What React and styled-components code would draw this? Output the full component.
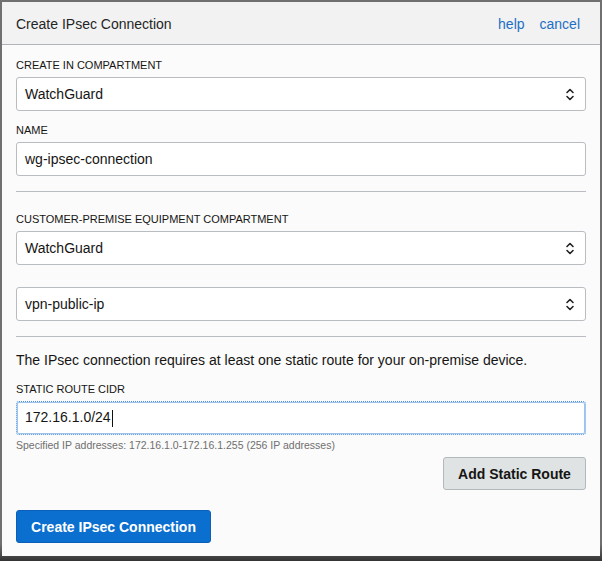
import React from "react";
import styled, { createGlobalStyle } from "styled-components";

const Global = createGlobalStyle`
  html, body { margin: 0; padding: 0; }
  body {
    background: #6d6d6d;
    font-family: "Liberation Sans", Arial, sans-serif;
    width: 602px;
    height: 561px;
    overflow: hidden;
  }
  * { box-sizing: border-box; }
`;

const Frame = styled.div`
  width: 602px;
  height: 561px;
  padding: 2px 2px 5px 2px;
  background: linear-gradient(to bottom, #707070 0%, #707070 97%, #333 100%);
`;

const Panel = styled.div`
  background: #fbfbfb;
  height: 100%;
  display: flex;
  flex-direction: column;
`;

const Header = styled.div`
  height: 43px;
  background: #f2f2f2;
  border-bottom: 1px solid #b0b4ba;
  display: flex;
  align-items: center;
  justify-content: space-between;
  padding: 0 20px 0 14px;
  flex-shrink: 0;
`;

const Title = styled.div`
  font-size: 14px;
  color: #252525;
  padding-top: 1px;
`;

const Links = styled.div`
  display: flex;
  gap: 15px;
  padding-top: 1px;
`;

const Link = styled.a`
  font-size: 14px;
  color: #1f6fc5;
  text-decoration: none;
`;

const Body = styled.div`
  padding: 14px 14px 0 14px;
  display: flex;
  flex-direction: column;
`;

const Label = styled.div`
  font-size: 11px;
  line-height: 13px;
  color: #161513;
  text-transform: uppercase;
  margin-top: ${(p) => p.$mt ?? 0}px;
  margin-bottom: 5px;
`;

const BoxBase = styled.div`
  height: 34px;
  border: 1px solid ${(p) => (p.$focus ? "transparent" : "#b9bdc2")};
  border-radius: 3px;
  background: #fff;
  display: flex;
  align-items: center;
  padding: 0 10px 0 8px;
  font-size: 14px;
  color: #161513;
  margin-top: ${(p) => p.$mt ?? 0}px;
  ${(p) =>
    p.$focus &&
    `outline: 1px dotted #4a90e2; outline-offset: -1px; box-shadow: inset 0 0 0 1px #9ec2ea;`}
`;

const Value = styled.span`
  flex: 1;
`;

const Caret = styled.span`
  display: inline-block;
  width: 1px;
  height: 17px;
  background: #111;
  vertical-align: middle;
  margin-left: 1px;
`;

const Divider = styled.div`
  height: 1px;
  background: #b9bdc2;
  margin-top: ${(p) => p.$mt}px;
`;

const Para = styled.p`
  margin: 15px 0 0 0;
  font-size: 14px;
  line-height: 16px;
  color: #161513;
`;

const Help = styled.div`
  font-size: 10.5px;
  line-height: 12px;
  color: #6f6f6f;
  margin-top: 4px;
`;

const Row = styled.div`
  display: flex;
  justify-content: flex-end;
  margin-top: 6px;
`;

const SecondaryButton = styled.button`
  height: 33px;
  width: 143px;
  border: 1px solid #b3b8bc;
  border-radius: 3px;
  background: #dfe3e4;
  font-family: inherit;
  font-weight: bold;
  font-size: 14px;
  color: #161513;
  padding: 0;
`;

const PrimaryButton = styled.button`
  align-self: flex-start;
  margin-top: 20px;
  height: 33px;
  width: 195px;
  border: 1px solid #0a5fb8;
  border-radius: 3px;
  background: #0b6fcf;
  font-family: inherit;
  font-weight: bold;
  font-size: 14px;
  color: #fff;
  padding: 0;
`;

const Chevrons = () => (
  <svg width="10" height="15" viewBox="0 0 10 15" fill="none" stroke="#222" strokeWidth="1.6" strokeLinecap="round" strokeLinejoin="round">
    <path d="M2 5.5 L5 2.5 L8 5.5" />
    <path d="M2 9.5 L5 12.5 L8 9.5" />
  </svg>
);

const Select = ({ value, mt }) => (
  <BoxBase $mt={mt}>
    <Value>{value}</Value>
    <Chevrons />
  </BoxBase>
);

export default function App() {
  return (
    <>
      <Global />
      <Frame>
        <Panel>
          <Header>
            <Title>Create IPsec Connection</Title>
            <Links>
              <Link>help</Link>
              <Link>cancel</Link>
            </Links>
          </Header>
          <Body>
            <Label>Create in compartment</Label>
            <Select value="WatchGuard" />
            <Label $mt={13}>Name</Label>
            <BoxBase>
              <Value>wg-ipsec-connection</Value>
            </BoxBase>
            <Divider $mt={15} />
            <Label $mt={21}>Customer-Premise Equipment Compartment</Label>
            <Select value="WatchGuard" />
            <Select value="vpn-public-ip" mt={22} />
            <Divider $mt={15} />
            <Para>The IPsec connection requires at least one static route for your on-premise device.</Para>
            <Label $mt={15}>Static Route CIDR</Label>
            <BoxBase $focus>
              <Value>
                172.16.1.0/24
                <Caret />
              </Value>
            </BoxBase>
            <Help>Specified IP addresses: 172.16.1.0-172.16.1.255 (256 IP addresses)</Help>
            <Row>
              <SecondaryButton>Add Static Route</SecondaryButton>
            </Row>
            <PrimaryButton>Create IPsec Connection</PrimaryButton>
          </Body>
        </Panel>
      </Frame>
    </>
  );
}
